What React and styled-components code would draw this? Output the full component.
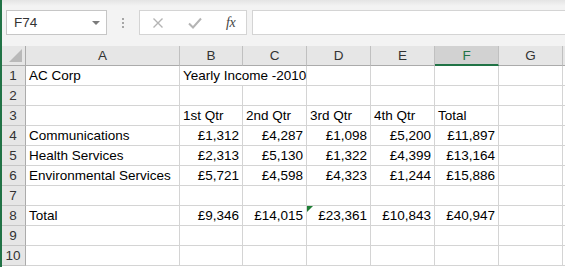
import React from "react";
import styled, { createGlobalStyle } from "styled-components";

const GlobalStyle = createGlobalStyle`
  html, body {
    margin: 0;
    padding: 0;
    background: #ffffff;
  }
  body {
    font-family: "Liberation Sans", Arial, sans-serif;
    overflow: hidden;
  }
`;

// widths of the sheet columns (row header first)
const COLS = [24, 154, 63, 64, 64, 64, 64, 64, 64];
const LETTERS = ["A", "B", "C", "D", "E", "F", "G", ""];

const sheet = [
  [{ t: "AC Corp" }, { t: "Yearly Income -2010", span: 2 }, null, {}, {}, {}, {}, {}],
  [{}, {}, {}, {}, {}, {}, {}, {}],
  [{}, { t: "1st Qtr" }, { t: "2nd Qtr" }, { t: "3rd Qtr" }, { t: "4th Qtr" }, { t: "Total" }, {}, {}],
  [{ t: "Communications" }, { n: "£1,312" }, { n: "£4,287" }, { n: "£1,098" }, { n: "£5,200" }, { n: "£11,897" }, {}, {}],
  [{ t: "Health Services" }, { n: "£2,313" }, { n: "£5,130" }, { n: "£1,322" }, { n: "£4,399" }, { n: "£13,164" }, {}, {}],
  [{ t: "Environmental Services" }, { n: "£5,721" }, { n: "£4,598" }, { n: "£4,323" }, { n: "£1,244" }, { n: "£15,886" }, {}, {}],
  [{}, {}, {}, {}, {}, {}, {}, {}],
  [{ t: "Total" }, { n: "£9,346" }, { n: "£14,015" }, { n: "£23,361", flag: true }, { n: "£10,843" }, { n: "£40,947" }, {}, {}],
  [{}, {}, {}, {}, {}, {}, {}, {}],
  [{}, {}, {}, {}, {}, {}, {}, {}],
];

// styles
const Window = styled.div`
  display: flex;
  width: 565px;
  height: 267px;
  overflow: hidden;
`;

const Edge = styled.div`
  width: 2px;
  flex: none;
  background-color: #217346;
`;

const Main = styled.div`
  flex: 1;
  display: flex;
  flex-direction: column;
  overflow: hidden;
`;

const TopBar = styled.div`
  height: 46px;
  flex: none;
  display: flex;
  align-items: flex-start;
  padding: 10px 0 0 4px;
  box-sizing: border-box;
  background: linear-gradient(#e4e4e4 0px, #f3f3f3 6px, #f3f3f3 100%);
`;

const NameBox = styled.div`
  width: 101px;
  height: 25px;
  box-sizing: border-box;
  border: 1px solid #c6c6c6;
  background-color: #ffffff;
  display: flex;
  align-items: center;
  justify-content: space-between;
  padding: 0 6px 0 7px;
  font-size: 13.5px;
  color: #333333;
`;

const Caret = styled.span`
  width: 0;
  height: 0;
  border-left: 4px solid transparent;
  border-right: 4px solid transparent;
  border-top: 4px solid #7b7b7b;
`;

const Grip = styled.div`
  width: 32px;
  height: 25px;
  display: flex;
  flex-direction: column;
  align-items: center;
  justify-content: center;
  gap: 2px;
`;

const GripDot = styled.span`
  width: 2px;
  height: 2px;
  background-color: #a6a6a6;
`;

const ButtonBox = styled.div`
  width: 108px;
  height: 25px;
  box-sizing: border-box;
  border: 1px solid #d4d4d4;
  background-color: #ffffff;
  display: flex;
  align-items: center;
  padding-left: 12px;
`;

const IconSlot = styled.div`
  width: 36px;
  display: flex;
  align-items: center;
  justify-content: flex-start;
`;

const Fx = styled.span`
  font-family: "Liberation Serif", "Times New Roman", serif;
  font-style: italic;
  font-size: 14px;
  color: #444444;
  letter-spacing: -0.5px;
  margin-left: 2px;
`;

const FormulaInput = styled.div`
  flex: 1;
  height: 25px;
  margin-left: 5px;
  box-sizing: border-box;
  border: 1px solid #d4d4d4;
  border-right: none;
  background-color: #ffffff;
`;

const Grid = styled.div`
  display: flex;
  flex-direction: column;
`;

const Row = styled.div`
  display: flex;
  height: 20px;
  flex: none;
`;

const Corner = styled.div`
  width: 24px;
  flex: none;
  box-sizing: border-box;
  background-color: #e6e6e6;
  border-right: 1px solid #ababab;
  border-bottom: 1px solid #ababab;
  position: relative;

  &::after {
    content: "";
    position: absolute;
    right: 3px;
    bottom: 3px;
    width: 0;
    height: 0;
    border-left: 13px solid transparent;
    border-bottom: 13px solid #b9b9b9;
  }
`;

const ColHead = styled.div`
  width: ${(p) => p.$w}px;
  flex: none;
  box-sizing: border-box;
  background-color: ${(p) => (p.$active ? "#d2d2d2" : "#e6e6e6")};
  border-right: 1px solid #c0c0c0;
  border-bottom: ${(p) => (p.$active ? "2px solid #217346" : "1px solid #ababab")};
  color: ${(p) => (p.$active ? "#217346" : "#333333")};
  font-size: 13.5px;
  display: flex;
  align-items: center;
  justify-content: center;
  padding-bottom: ${(p) => (p.$active ? 0 : 1)}px;
`;

const RowHead = styled.div`
  width: 24px;
  flex: none;
  box-sizing: border-box;
  background-color: #e6e6e6;
  border-right: 1px solid #ababab;
  border-bottom: 1px solid #c6c6c6;
  color: #333333;
  font-size: 13.5px;
  display: flex;
  align-items: flex-end;
  justify-content: center;
  padding-bottom: 2px;
  padding-right: 1px;
`;

const Cell = styled.div`
  width: ${(p) => p.$w}px;
  flex: none;
  box-sizing: border-box;
  border-right: 1px solid #d4d4d4;
  border-bottom: 1px solid #d4d4d4;
  color: #000000;
  font-size: 13.5px;
  white-space: nowrap;
  display: flex;
  align-items: flex-end;
  justify-content: ${(p) => (p.$num ? "flex-end" : "flex-start")};
  padding: 0 3px 2px 3px;
  position: relative;

  &::before {
    content: "";
    display: ${(p) => (p.$flag ? "block" : "none")};
    position: absolute;
    left: 0;
    top: 0;
    width: 0;
    height: 0;
    border-top: 6px solid #1e7e34;
    border-right: 6px solid transparent;
  }
`;

function CrossIcon() {
  return (
    <svg width="12" height="12" viewBox="0 0 12 12">
      <path d="M1.5 1.5 L10.5 10.5 M10.5 1.5 L1.5 10.5" stroke="#b4b4b4" strokeWidth="1.4" fill="none" />
    </svg>
  );
}

function CheckIcon() {
  return (
    <svg width="14" height="12" viewBox="0 0 14 12">
      <path d="M1 6.5 L5 10.5 L13 1.5" stroke="#b4b4b4" strokeWidth="2" fill="none" />
    </svg>
  );
}

export default function App() {
  return (
    <>
      <GlobalStyle />
      <Window>
        <Edge />
        <Main>
          <TopBar>
            <NameBox>
              <span>F74</span>
              <Caret />
            </NameBox>
            <Grip>
              <GripDot />
              <GripDot />
              <GripDot />
            </Grip>
            <ButtonBox>
              <IconSlot>
                <CrossIcon />
              </IconSlot>
              <IconSlot>
                <CheckIcon />
              </IconSlot>
              <Fx>fx</Fx>
            </ButtonBox>
            <FormulaInput />
          </TopBar>

          <Grid>
            <Row>
              <Corner />
              {LETTERS.map((l, i) => (
                <ColHead key={i} $w={COLS[i + 1]} $active={l === "F"}>
                  {l}
                </ColHead>
              ))}
            </Row>

            {sheet.map((cells, r) => (
              <Row key={r}>
                <RowHead>{r + 1}</RowHead>
                {cells.map((c, i) => {
                  if (c === null) return null;
                  const w = c.span ? COLS[i + 1] + COLS[i + 2] : COLS[i + 1];
                  return (
                    <Cell key={i} $w={w} $num={!!c.n} $flag={c.flag}>
                      {c.t || c.n || ""}
                    </Cell>
                  );
                })}
              </Row>
            ))}
          </Grid>
        </Main>
      </Window>
    </>
  );
}
